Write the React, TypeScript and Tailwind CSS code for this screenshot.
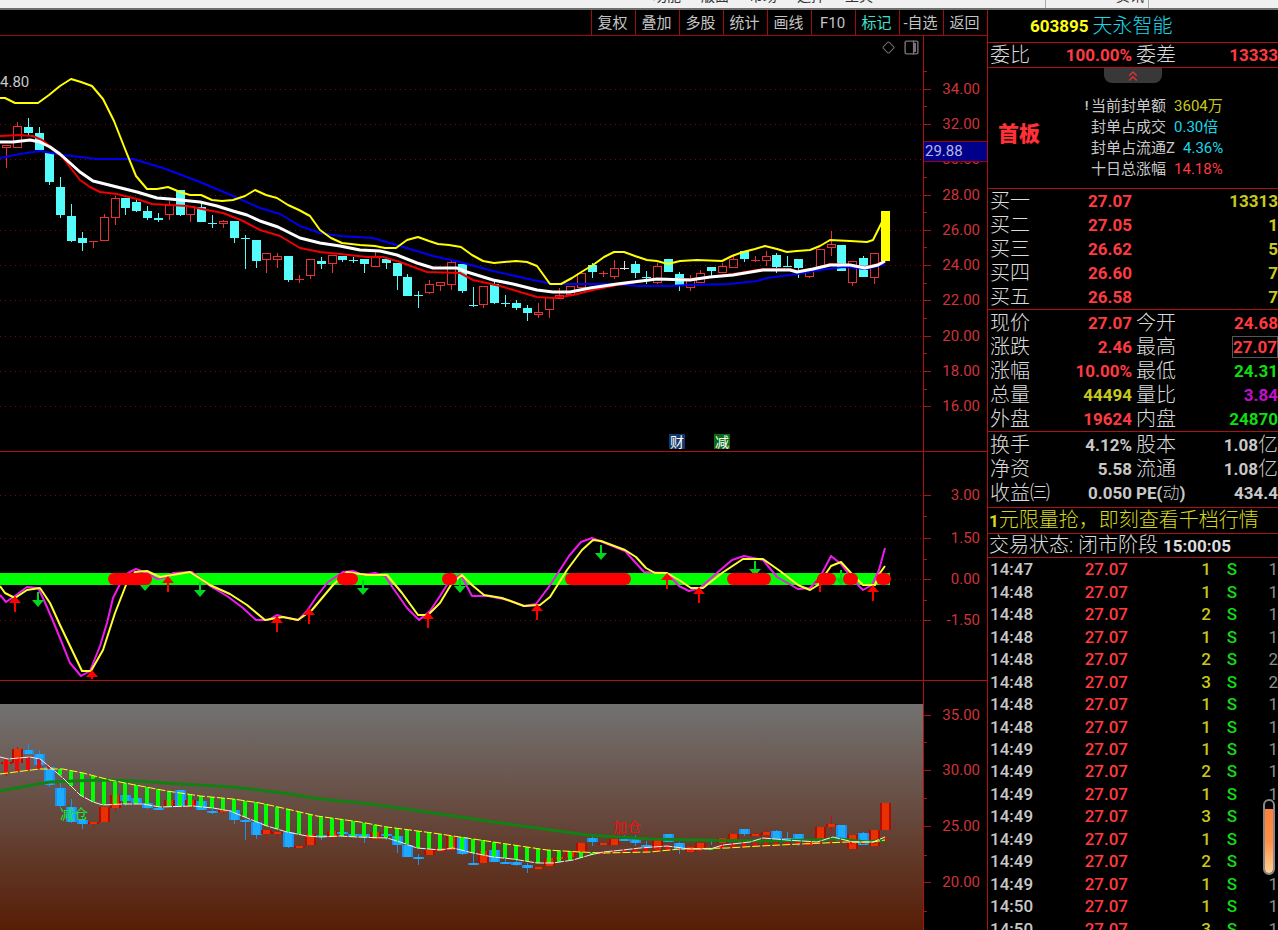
import type { ReactNode } from "react";
import { ChevronsUp, PanelRight, Diamond } from "lucide-react";

type Point = [number, number];
type CandleKind = "u" | "d" | "w";
// body top, body bottom, high, low
type Candle = [CandleKind, number, number, number, number];

const CANDLES: Candle[] = [
  ["u", 145, 148, 145, 168], ["u", 126, 148, 122, 148], ["d", 127, 133, 118, 135],
  ["d", 133, 150, 127, 150], ["d", 153, 182, 153, 185], ["d", 187, 215, 177, 218],
  ["d", 216, 241, 204, 242], ["d", 238, 243, 232, 251], ["u", 241, 242, 241, 248],
  ["u", 217, 241, 214, 241], ["u", 198, 218, 196, 225], ["d", 198, 208, 198, 215],
  ["d", 202, 211, 199, 212], ["d", 211, 218, 206, 220], ["d", 218, 220, 213, 222],
  ["u", 205, 215, 201, 220], ["d", 190, 215, 190, 216], ["u", 206, 215, 206, 222],
  ["d", 207, 222, 204, 222], ["d", 223, 224, 215, 228], ["u", 221, 224, 220, 228],
  ["d", 221, 238, 221, 243], ["d", 238, 239, 235, 269], ["d", 240, 261, 240, 268],
  ["u", 253, 260, 253, 273], ["u", 256, 260, 253, 268], ["d", 256, 280, 256, 282],
  ["u", 279, 280, 275, 283], ["u", 259, 276, 259, 279], ["d", 261, 264, 257, 269],
  ["u", 255, 264, 255, 273], ["d", 256, 260, 256, 262], ["d", 260, 261, 257, 263],
  ["d", 259, 264, 259, 273], ["u", 256, 267, 252, 267], ["d", 259, 263, 259, 269],
  ["d", 263, 276, 263, 290], ["d", 277, 296, 274, 296], ["d", 295, 296, 291, 308],
  ["u", 284, 293, 280, 294], ["u", 282, 286, 282, 291], ["u", 262, 285, 260, 290],
  ["d", 264, 291, 264, 293], ["d", 305, 306, 287, 307], ["u", 286, 305, 286, 308],
  ["d", 284, 303, 280, 304], ["d", 303, 304, 295, 307], ["d", 303, 308, 300, 310],
  ["d", 308, 313, 305, 321], ["u", 312, 315, 303, 318], ["u", 297, 310, 297, 318],
  ["u", 295, 299, 288, 299], ["u", 286, 295, 286, 295], ["u", 273, 288, 273, 288],
  ["d", 265, 272, 263, 278], ["u", 273, 274, 271, 277], ["u", 268, 277, 260, 279],
  ["w", 268, 269, 261, 270], ["d", 264, 273, 261, 278], ["d", 277, 278, 271, 284],
  ["u", 266, 283, 263, 284], ["d", 259, 272, 259, 272], ["d", 274, 285, 272, 291],
  ["u", 280, 288, 275, 291], ["u", 273, 283, 270, 283], ["d", 267, 271, 267, 277],
  ["u", 266, 273, 263, 273], ["u", 259, 268, 254, 268], ["d", 251, 259, 251, 262],
  ["u", 260, 261, 256, 262], ["u", 256, 261, 251, 266], ["d", 255, 267, 253, 273],
  ["d", 266, 267, 256, 267], ["d", 259, 268, 259, 278], ["u", 270, 277, 270, 278],
  ["u", 249, 268, 249, 268], ["u", 244, 248, 231, 256], ["d", 245, 271, 245, 271],
  ["u", 261, 283, 261, 286], ["d", 258, 277, 256, 277], ["u", 253, 278, 253, 284],
  ["u", 211, 253, 211, 253],
];

const candleX = (i: number) => Math.round(6 + i * 10.85);

const parse = (s: string): Point[] =>
  s.trim().split(/\s+/).map((p) => p.split(",").map(Number) as Point);

const UPPER =
  "0,98 5,98 15,103 38,103 49,95 60,86 71,79 81,82 92,86 103,99 114,121 125,149 136,176 147,189 157,189 168,187 180,192 190,195 201,195 212,200 222,201 233,200 245,196 255,190 266,195 277,198 288,205 299,210 310,216 320,230 331,238 342,243 360,245 375,246 385,248 396,248 407,240 418,237 429,241 438,244 449,245 461,247 472,255 483,261 494,263 504,262 516,261 527,262 537,266 550,284 561,284 572,278 583,271 593,265 604,257 614,252 624,252 635,256 647,260 657,261 668,264 680,261 697,260 722,261 732,256 743,252 755,249 765,246 777,249 787,252 797,251 810,250 820,246 830,240 850,241 867,242 873,240 882,222";
const WHITE =
  "0,142 13,142 30,140 40,142 50,147 60,154 80,172 93,181 113,186 137,192 157,198 170,199 200,202 217,206 233,211 247,215 260,221 278,227 290,233 300,238 320,243 340,246 360,250 380,251 397,255 417,263 433,268 457,268 467,272 493,280 513,284 537,290 553,292 570,292 590,288 617,284 657,279 690,280 710,277 733,275 763,270 790,270 797,272 813,269 830,265 850,265 865,268 878,265 885,261";
const RED =
  "0,136 20,135 33,136 42,140 50,146 63,158 80,180 90,187 100,192 117,194 137,199 152,204 187,206 207,210 223,213 243,221 260,230 280,236 300,248 320,252 340,254 367,257 383,257 400,262 427,272 460,273 473,280 500,286 520,292 537,297 553,298 573,295 593,290 617,285 657,279 690,279 710,277 733,274 763,269 790,269 797,271 813,269 830,264 850,265 865,267 878,264 885,261";
const BLUE =
  "0,158 20,154 40,151 63,155 97,159 133,159 163,168 200,182 233,196 260,208 280,214 300,226 320,233 340,236 373,238 400,246 433,256 460,262 493,271 533,280 553,284 613,284 640,286 667,286 690,285 730,284 757,281 767,278 797,274 820,270 843,267 867,269 885,264";

const OSC_FAST =
  "0,595 6,602 15,596 27,587 38,588 43,598 53,621 62,643 70,663 81,676 90,671 100,646 107,623 113,598 122,580 128,573 136,569 147,573 157,579 167,577 173,573 192,572 210,586 227,596 243,608 256,620 268,620 277,615 283,617 298,620 307,611 317,596 328,582 343,572 353,571 363,575 375,573 385,576 393,588 407,608 419,620 430,611 440,596 450,580 461,575 472,596 488,596 508,600 524,606 536,604 548,588 558,573 569,556 581,542 592,538 605,543 625,551 644,572 667,573 679,586 689,591 700,588 718,572 732,560 744,556 763,560 777,577 798,589 810,588 820,577 831,556 841,564 854,581 863,590 872,585 879,570 885,548";
const OSC_SLOW =
  "0,586 5,593 15,598 27,590 40,588 50,603 60,625 82,671 91,671 103,650 115,613 126,585 135,572 147,571 160,577 172,575 190,572 210,585 230,594 247,605 265,620 283,617 298,620 312,610 333,585 347,572 360,574 367,575 387,575 402,593 418,615 428,615 440,603 452,583 462,575 472,585 484,595 502,598 524,606 540,605 550,597 567,570 582,550 593,540 601,541 625,550 636,557 646,568 655,573 667,573 679,580 691,588 703,588 722,573 743,559 763,559 780,571 798,585 810,590 818,585 831,566 841,562 851,573 863,585 875,585 880,573 885,566";

const COST_FAST =
  "0,757 8,759 30,757 40,759 50,767 63,778 80,795 93,802 103,805 123,804 143,804 160,807 193,806 213,808 230,811 247,818 267,826 287,832 307,836 320,837 340,836 357,837 387,838 400,842 417,848 440,850 453,848 473,853 493,857 513,859 537,863 553,863 573,860 590,855 603,852 623,850 640,848 667,846 690,849 710,849 723,845 750,842 763,838 787,840 817,842 833,837 853,842 873,842 885,837";
const COST_SLOW =
  "0,774 23,771 40,769 63,769 83,773 110,780 130,784 167,791 200,796 233,799 260,803 287,809 317,816 360,822 387,827 433,833 480,840 520,846 547,850 580,852 603,853 650,852 680,849 727,848 760,846 800,844 847,842 873,842 885,840";
const COST_LONG =
  "0,791 27,786 50,782 73,781 100,780 137,781 180,784 233,787 283,793 320,799 370,804 420,811 487,821 537,828 587,835 650,839 700,840 767,841 813,840 840,839 867,842 885,840";

function valueAt(line: Point[], x: number) {
  const i = Math.max(1, line.findIndex((p) => p[0] >= x));
  const [x0, y0] = line[i - 1];
  const [x1, y1] = line[i];
  return Math.round(y0 + ((y1 - y0) * (x - x0)) / (x1 - x0));
}

const FAST_POINTS = parse(COST_FAST);
const SLOW_POINTS = parse(COST_SLOW);

interface AxisTick {
  y: number;
  label?: string;
}

function Axis({ ticks, minor }: { ticks: AxisTick[]; minor: number[] }) {
  return (
    <g shapeRendering="crispEdges">
      {ticks.map((t) => (
        <g key={t.y}>
          <line x1="924" x2="931" y1={t.y} y2={t.y} stroke="#b01010" />
          <text x="980" y={t.y + 5} textAnchor="end" fontSize="15" fill="#cf3339">
            {t.label}
          </text>
        </g>
      ))}
      {minor.map((y) => (
        <line key={y} x1="924" x2="927" y1={y} y2={y} stroke="#b01010" />
      ))}
    </g>
  );
}

function Grid({ rows }: { rows: number[] }) {
  return (
    <g stroke="#7a0808" strokeDasharray="1 4" shapeRendering="crispEdges">
      {rows.map((y) => (
        <line key={y} x1="0" x2="923" y1={y} y2={y} />
      ))}
    </g>
  );
}

function Panel({
  top,
  height,
  className,
  label,
  children,
}: {
  top: number;
  height: number;
  className: string;
  label: string;
  children: ReactNode;
}) {
  return (
    <section className={`min-h-0 ${className}`} aria-label={label}>
      <svg
        className="block h-full w-full font-['Roboto','Noto_Sans_CJK_SC',sans-serif]"
        viewBox={`0 ${top} 987 ${height}`}
        preserveAspectRatio="xMaxYMid slice"
      >
        {children}
      </svg>
    </section>
  );
}

const PRICE_TICKS: AxisTick[] = [
  { y: 89, label: "34.00" },
  { y: 124, label: "32.00" },
  { y: 159, label: "30.00" },
  { y: 195, label: "28.00" },
  { y: 230, label: "26.00" },
  { y: 265, label: "24.00" },
  { y: 300, label: "22.00" },
  { y: 336, label: "20.00" },
  { y: 371, label: "18.00" },
  { y: 406, label: "16.00" },
];

function PriceChart() {
  return (
    <Panel top={36} height={416} className="flex-[416]" label="K线">
      <Grid rows={PRICE_TICKS.map((t) => t.y)} />
      <g shapeRendering="crispEdges">
        {CANDLES.slice(0, -1).map(([kind, top, bottom, high, low], i) => {
          const x = candleX(i);
          const color = kind === "u" ? "#e8303a" : kind === "d" ? "#54fcfc" : "#e0e0e0";
          const flat = bottom - top <= 2;
          return (
            <g key={i} fill={color}>
              <rect x={x} y={high} width="1" height={Math.max(0, top - high)} />
              <rect x={x} y={bottom} width="1" height={Math.max(0, low - bottom)} />
              {kind === "u" && !flat ? (
                <rect
                  x={x - 4 + 0.5}
                  y={top + 0.5}
                  width="8"
                  height={bottom - top - 1}
                  fill="none"
                  stroke={color}
                />
              ) : (
                <rect x={x - 4} y={top} width="9" height={bottom - top} />
              )}
            </g>
          );
        })}
      </g>
      <g fill="none" strokeLinejoin="round">
        <polyline points={BLUE} stroke="#0000f0" strokeWidth="2" />
        <polyline points={UPPER} stroke="#ffff00" strokeWidth="2" />
        <polyline points={RED} stroke="#f00000" strokeWidth="2" />
        <polyline points={WHITE} stroke="#ffffff" strokeWidth="3" />
      </g>
      <rect x="881" y="211" width="9" height="50" fill="#ffff00" />

      <text x="0" y="87" fontSize="15" fill="#c8c8c8">4.80</text>
      <g fontSize="14" fill="#ffffff" textAnchor="middle">
        <rect x="669" y="434" width="16" height="15" fill="#123a6b" />
        <text x="677" y="447">财</text>
        <rect x="714" y="434" width="16" height="15" fill="#0b6b12" />
        <text x="722" y="447">减</text>
      </g>
      <Diamond x="882" y="41" width="13" height="13" color="#6a6a6a" strokeWidth={2} />
      <PanelRight x="903" y="39" width="17" height="17" color="#7a7078" strokeWidth={2} />
      <rect x="913" y="43" width="3" height="9" fill="#7a7078" />

      <Axis ticks={PRICE_TICKS} minor={[71, 106, 141, 177, 212, 247, 283, 318, 353, 389]} />
      <g shapeRendering="crispEdges">
        <rect x="924" y="142" width="63" height="19" fill="#00008b" />
        <path d="M924 141.5H987M924 161.5H987" stroke="#a00000" />
        <line x1="923.5" x2="923.5" y1="36" y2="452" stroke="#b01010" />
        <line x1="0" x2="987" y1="451.5" y2="451.5" stroke="#b01010" />
      </g>
      <text x="925" y="156" fontSize="15" fill="#b8b8e0">29.88</text>
    </Panel>
  );
}

const UP_ARROWS: Point[] = [
  [15, 598], [92, 672], [168, 578], [277, 618], [309, 610], [428, 614],
  [537, 606], [667, 575], [699, 589], [820, 578], [873, 587],
];
const DOWN_ARROWS: Point[] = [
  [38, 592], [145, 576], [200, 582], [363, 580], [460, 578], [601, 545], [755, 561], [841, 570],
];
const RED_ZONES: Point[] = [
  [108, 152], [337, 358], [442, 457], [565, 631], [727, 771], [817, 836], [843, 858], [876, 891],
];

function OscillatorChart() {
  return (
    <Panel top={452} height={229} className="flex-[229]" label="指标">
      <Grid rows={[495, 538, 579, 620]} />
      <rect x="0" y="573" width="890" height="12" fill="#00ff00" />
      <g fill="none" strokeWidth="2" strokeLinejoin="round">
        <polyline points={OSC_FAST} stroke="#f01af0" />
        <polyline points={OSC_SLOW} stroke="#ffff30" />
      </g>
      {DOWN_ARROWS.map(([x, y]) => (
        <path key={x} d={`M${x - 1} ${y}h2v8h5l-6 7l-6 -7h5z`} fill="#00d820" />
      ))}
      {RED_ZONES.map(([a, b]) => (
        <rect key={a} x={a} y="573" width={b - a} height="12" rx="6" fill="#ff0000" />
      ))}
      {UP_ARROWS.map(([x, y]) => (
        <path
          key={x}
          d={`M${x} ${y - 2}l6 7h-5v${y > 650 ? 2 : 9}h-2v${y > 650 ? -2 : -9}h-5z`}
          fill="#ff0000"
        />
      ))}
      <Axis
        ticks={[
          { y: 495, label: "3.00" },
          { y: 538, label: "1.50" },
          { y: 579, label: "0.00" },
          { y: 620, label: "-1.50" },
        ]}
        minor={[516, 559, 600]}
      />
      <g stroke="#b01010" shapeRendering="crispEdges">
        <line x1="923.5" x2="923.5" y1="452" y2="681" />
        <line x1="0" x2="987" y1="680" y2="680" />
      </g>
    </Panel>
  );
}

// same prices as the K-line panel, on this panel's scale
const rescale = (y: number) => Math.round(726 + (y - 89) * 0.634);

function CostChart() {
  return (
    <Panel top={681} height={249} className="flex-[249]" label="成本">
      <defs>
        <linearGradient id="dusk" x1="0" y1="0" x2="0" y2="1">
          <stop offset="0" stopColor="#727272" />
          <stop offset="0.5" stopColor="#66483c" />
          <stop offset="1" stopColor="#571d05" />
        </linearGradient>
      </defs>
      <rect x="0" y="704" width="923" height="226" fill="url(#dusk)" />
      <g shapeRendering="crispEdges">
        {CANDLES.map(([kind, top, bottom, high, low], i) => {
          const x = candleX(i);
          const y = rescale(top);
          const h = Math.max(2, rescale(bottom) - y);
          const up = kind === "u";
          return (
            <g key={i}>
              <rect
                x={x}
                y={rescale(high)}
                width="1"
                height={rescale(low) - rescale(high)}
                fill={up ? "#c01008" : "#1e90f0"}
              />
              <rect x={x - 5} y={y} width="11" height={h} fill={up ? "#b00c04" : "#1c90f0"} />
              <rect x={x - 3} y={y} width="7" height={h} fill={up ? "#e83000" : "#1cacff"} />
            </g>
          );
        })}
        {CANDLES.map((_, i) => {
          const x = candleX(i);
          const fast = valueAt(FAST_POINTS, Math.min(x, 885));
          const slow = valueAt(SLOW_POINTS, Math.min(x, 885));
          return (
            <rect
              key={i}
              x={x - 2}
              y={Math.min(fast, slow)}
              width="4"
              height={Math.max(2, Math.abs(fast - slow))}
              fill={fast > slow ? "#00ff00" : "#f00808"}
            />
          );
        })}
      </g>
      <g fill="none">
        <polyline points={COST_LONG} stroke="#128012" strokeWidth="3" />
        <polyline points={COST_SLOW} stroke="#ffff20" strokeWidth="1" strokeDasharray="8 2" />
        <polyline points={COST_FAST} stroke="#f4ece8" strokeWidth="1" strokeDasharray="9 1" />
      </g>
      <text x="60" y="819" fontSize="14" fill="#18e838">减仓</text>
      <text x="613" y="832" fontSize="14" fill="#f01010">加仓</text>
      <Axis
        ticks={[
          { y: 715, label: "35.00" },
          { y: 770, label: "30.00" },
          { y: 826, label: "25.00" },
          { y: 882, label: "20.00" },
        ]}
        minor={[742, 798, 855, 911]}
      />
      <line x1="923.5" x2="923.5" y1="681" y2="930" stroke="#b01010" shapeRendering="crispEdges" />
    </Panel>
  );
}

const TOOLS = ["复权", "叠加", "多股", "统计", "画线", "F10", "标记", "-自选", "返回"];

function Toolbar() {
  return (
    <nav className="flex h-[26px] shrink-0 justify-end border-b border-[#a00c0c]">
      {TOOLS.map((name) => (
        <button
          key={name}
          className={`w-11 whitespace-nowrap border-l border-[#a00c0c] pr-0.5 text-[15px] leading-6 ${
            name === "标记" ? "text-[#40e0d0]" : "text-[#c4c4c4]"
          }`}
        >
          {name}
        </button>
      ))}
    </nav>
  );
}

function WindowStrip() {
  return (
    <header className="flex h-[10px] shrink-0 items-end overflow-hidden border-b-2 border-[#6e6e6e] bg-[#f0f0f0] text-[14px] leading-4 text-[#333]">
      <div className="flex flex-1 justify-end gap-5 pb-1 pr-[172px]">
        <span>功能</span>
        <span>版面</span>
        <span>市场</span>
        <span>选择</span>
        <span>工具</span>
      </div>
      <div className="h-5 w-[104px] border-x border-[#a8a8a8] pr-1 text-right">资讯</div>
      <div className="w-[129px]" />
    </header>
  );
}

const RED_TEXT = "text-[#ff3a40]";
const YELLOW_TEXT = "text-[#c8c81c]";
const GREEN_TEXT = "text-[#10dc10]";
const GRAY_TEXT = "text-[#c8c8c8]";

type Cell = [string, string, string];

function QuoteTable({ rows }: { rows: [Cell, Cell][] }) {
  return (
    <table className="w-full table-fixed">
      <colgroup>
        <col className="w-[64px]" />
        <col className="w-[80px]" />
        <col className="w-[58px]" />
        <col />
      </colgroup>
      <tbody>
        {rows.map(([a, b]) => (
          <tr key={a[0]} className="h-6">
            <th className="pl-0.5 text-left text-[20px] font-light text-[#dcdcdc]">{a[0]}</th>
            <td className={`text-right ${a[2]}`}>{a[1]}</td>
            <th
              className={`pl-1 text-left ${
                b[0].startsWith("PE")
                  ? "text-[17px] font-bold"
                  : "text-[20px] font-light text-[#dcdcdc]"
              }`}
            >
              {b[0] === "PE(动)" ? (
                <>
                  PE(<span className="font-light">动</span>)
                </>
              ) : (
                b[0]
              )}
            </th>
            <td className={`text-right ${b[2]}`}>
              {b[0] === "最高" ? (
                <span className="block h-[22px] w-[46px] justify-self-end border border-[#555]">
                  {b[1]}
                </span>
              ) : b[1].endsWith("亿") ? (
                <span className="flex items-center justify-end">
                  {b[1].slice(0, -1)}
                  <span className="text-[20px] font-light">亿</span>
                </span>
              ) : (
                b[1]
              )}
            </td>
          </tr>
        ))}
      </tbody>
    </table>
  );
}

const BIDS = [
  ["买一", "27.07", "13313"],
  ["买二", "27.05", "1"],
  ["买三", "26.62", "5"],
  ["买四", "26.60", "7"],
  ["买五", "26.58", "7"],
];

const TRADES = [
  ["14:47", "1", "1"], ["14:48", "1", "1"], ["14:48", "2", "1"], ["14:48", "1", "1"],
  ["14:48", "2", "2"], ["14:48", "3", "2"], ["14:48", "1", "1"], ["14:48", "1", "1"],
  ["14:49", "1", "1"], ["14:49", "2", "1"], ["14:49", "1", "1"], ["14:49", "3", "1"],
  ["14:49", "1", "1"], ["14:49", "2", "1"], ["14:49", "1", "1"], ["14:50", "1", "1"],
  ["14:50", "3", "1"],
];

const SEALS = [
  ["当前封单额", "3604万", YELLOW_TEXT],
  ["封单占成交", "0.30倍", "text-[#18d8e8]"],
  ["封单占流通Z", "4.36%", "text-[#18d8e8]"],
  ["十日总涨幅", "14.18%", RED_TEXT],
];

function QuotePanel() {
  return (
    <aside className="relative flex w-[291px] shrink-0 flex-col overflow-hidden border-l border-[#b01010] text-[17px] font-bold leading-5 text-[#c8c8c8]">
      <h1 className="flex h-[33px] shrink-0 items-center gap-1 border-b border-[#b01010] pl-[42px]">
        <span className="text-[#ffff10]">603895</span>
        <span className="text-[20px] font-light text-[#18d8e8]">天永智能</span>
      </h1>
      <div className="h-[25px] shrink-0 border-b border-[#b01010]">
        <QuoteTable rows={[[["委比", "100.00%", RED_TEXT], ["委差", "13333", RED_TEXT]]]} />
      </div>

      <div className="flex h-[121px] shrink-0 flex-col border-b border-[#b01010]">
        <button
          aria-label="收起"
          className="ml-[116px] flex h-[15px] w-[58px] shrink-0 items-center justify-center rounded-b-lg bg-[#383838]"
        >
          <ChevronsUp className="h-4 w-4 text-[#e83030]" />
        </button>
        <div className="flex items-center pl-2.5 pt-3">
          <strong className="w-[84px] pb-1.5 text-[21px] leading-6 text-[#ff3036]">首板</strong>
          <dl className="text-[15px] font-normal">
            {SEALS.map(([name, value, color], i) => (
              <div key={name} className="flex h-[21px] items-center gap-2 whitespace-nowrap">
                <dt className="flex">
                  <span className="w-[9px] text-center text-[12px] font-bold">
                    {i === 0 ? "!" : ""}
                  </span>
                  {name}
                </dt>
                <dd className={color}>{value}</dd>
              </div>
            ))}
          </dl>
        </div>
      </div>

      <div className="h-[121px] shrink-0 border-b border-[#b01010]">
        <table className="w-full table-fixed">
          <tbody>
            {BIDS.map(([name, price, volume]) => (
              <tr key={name} className="h-6">
                <th className="w-[64px] pl-0.5 text-left text-[20px] font-light text-[#dcdcdc]">
                  {name}
                </th>
                <td className={`w-[80px] text-right ${RED_TEXT}`}>{price}</td>
                <td className={`text-right ${YELLOW_TEXT}`}>{volume}</td>
              </tr>
            ))}
          </tbody>
        </table>
      </div>

      <div className="h-[122px] shrink-0 border-b border-[#b01010] pt-px">
        <QuoteTable
          rows={[
            [["现价", "27.07", RED_TEXT], ["今开", "24.68", RED_TEXT]],
            [["涨跌", "2.46", RED_TEXT], ["最高", "27.07", RED_TEXT]],
            [["涨幅", "10.00%", RED_TEXT], ["最低", "24.31", GREEN_TEXT]],
            [["总量", "44494", YELLOW_TEXT], ["量比", "3.84", "text-[#c010c8]"]],
            [["外盘", "19624", RED_TEXT], ["内盘", "24870", GREEN_TEXT]],
          ]}
        />
      </div>

      <div className="h-[76px] shrink-0 border-b border-[#b01010] pt-px">
        <QuoteTable
          rows={[
            [["换手", "4.12%", GRAY_TEXT], ["股本", "1.08亿", GRAY_TEXT]],
            [["净资", "5.58", GRAY_TEXT], ["流通", "1.08亿", GRAY_TEXT]],
            [["收益㈢", "0.050", GRAY_TEXT], ["PE(动)", "434.4", GRAY_TEXT]],
          ]}
        />
      </div>

      <a
        href="#level2"
        className="block h-[26px] shrink-0 whitespace-nowrap border-b border-[#b01010] pl-px text-[20px] font-light leading-6 text-[#d8d81c]"
      >
        <span className="text-[17px] font-bold">1</span>元限量抢，即刻查看千档行情
      </a>
      <p className="h-6 shrink-0 whitespace-nowrap border-b border-[#b01010] pl-px text-[20px] font-light leading-[22px] text-[#dcdcdc]">
        交易状态: 闭市阶段 <span className="text-[17px] font-bold">15:00:05</span>
      </p>

      <table className="h-[382px] w-full shrink-0 table-fixed font-medium">
        <tbody>
          {TRADES.map(([time, volume, count], i) => (
            <tr key={i}>
              <td className="w-[60px] pl-0.5">{time}</td>
              <td className={`w-[80px] text-right ${RED_TEXT}`}>27.07</td>
              <td className={`w-[83px] text-right ${YELLOW_TEXT}`}>{volume}</td>
              <td className={`w-[42px] text-center ${GREEN_TEXT}`}>S</td>
              <td className="text-right font-normal text-[#8c8c8c]">{count}</td>
            </tr>
          ))}
        </tbody>
      </table>

      {/* volume gauge floating over the trade list */}
      <div className="absolute bottom-[55px] right-[3px] flex h-[76px] w-3 flex-col justify-end overflow-hidden rounded-full border-2 border-[#888] bg-black">
        <div className="h-[64px] bg-linear-to-b from-[#ff7f38] via-[#ff8f48] to-[#ffd090]" />
      </div>
    </aside>
  );
}

export default function App() {
  return (
    <div className="flex h-screen flex-col overflow-hidden bg-black font-['Roboto','Noto_Sans_CJK_SC',sans-serif]">
      <WindowStrip />
      <div className="flex min-h-0 flex-1">
        <main className="flex min-w-0 flex-1 flex-col">
          <Toolbar />
          <PriceChart />
          <OscillatorChart />
          <CostChart />
        </main>
        <QuotePanel />
      </div>
    </div>
  );
}
